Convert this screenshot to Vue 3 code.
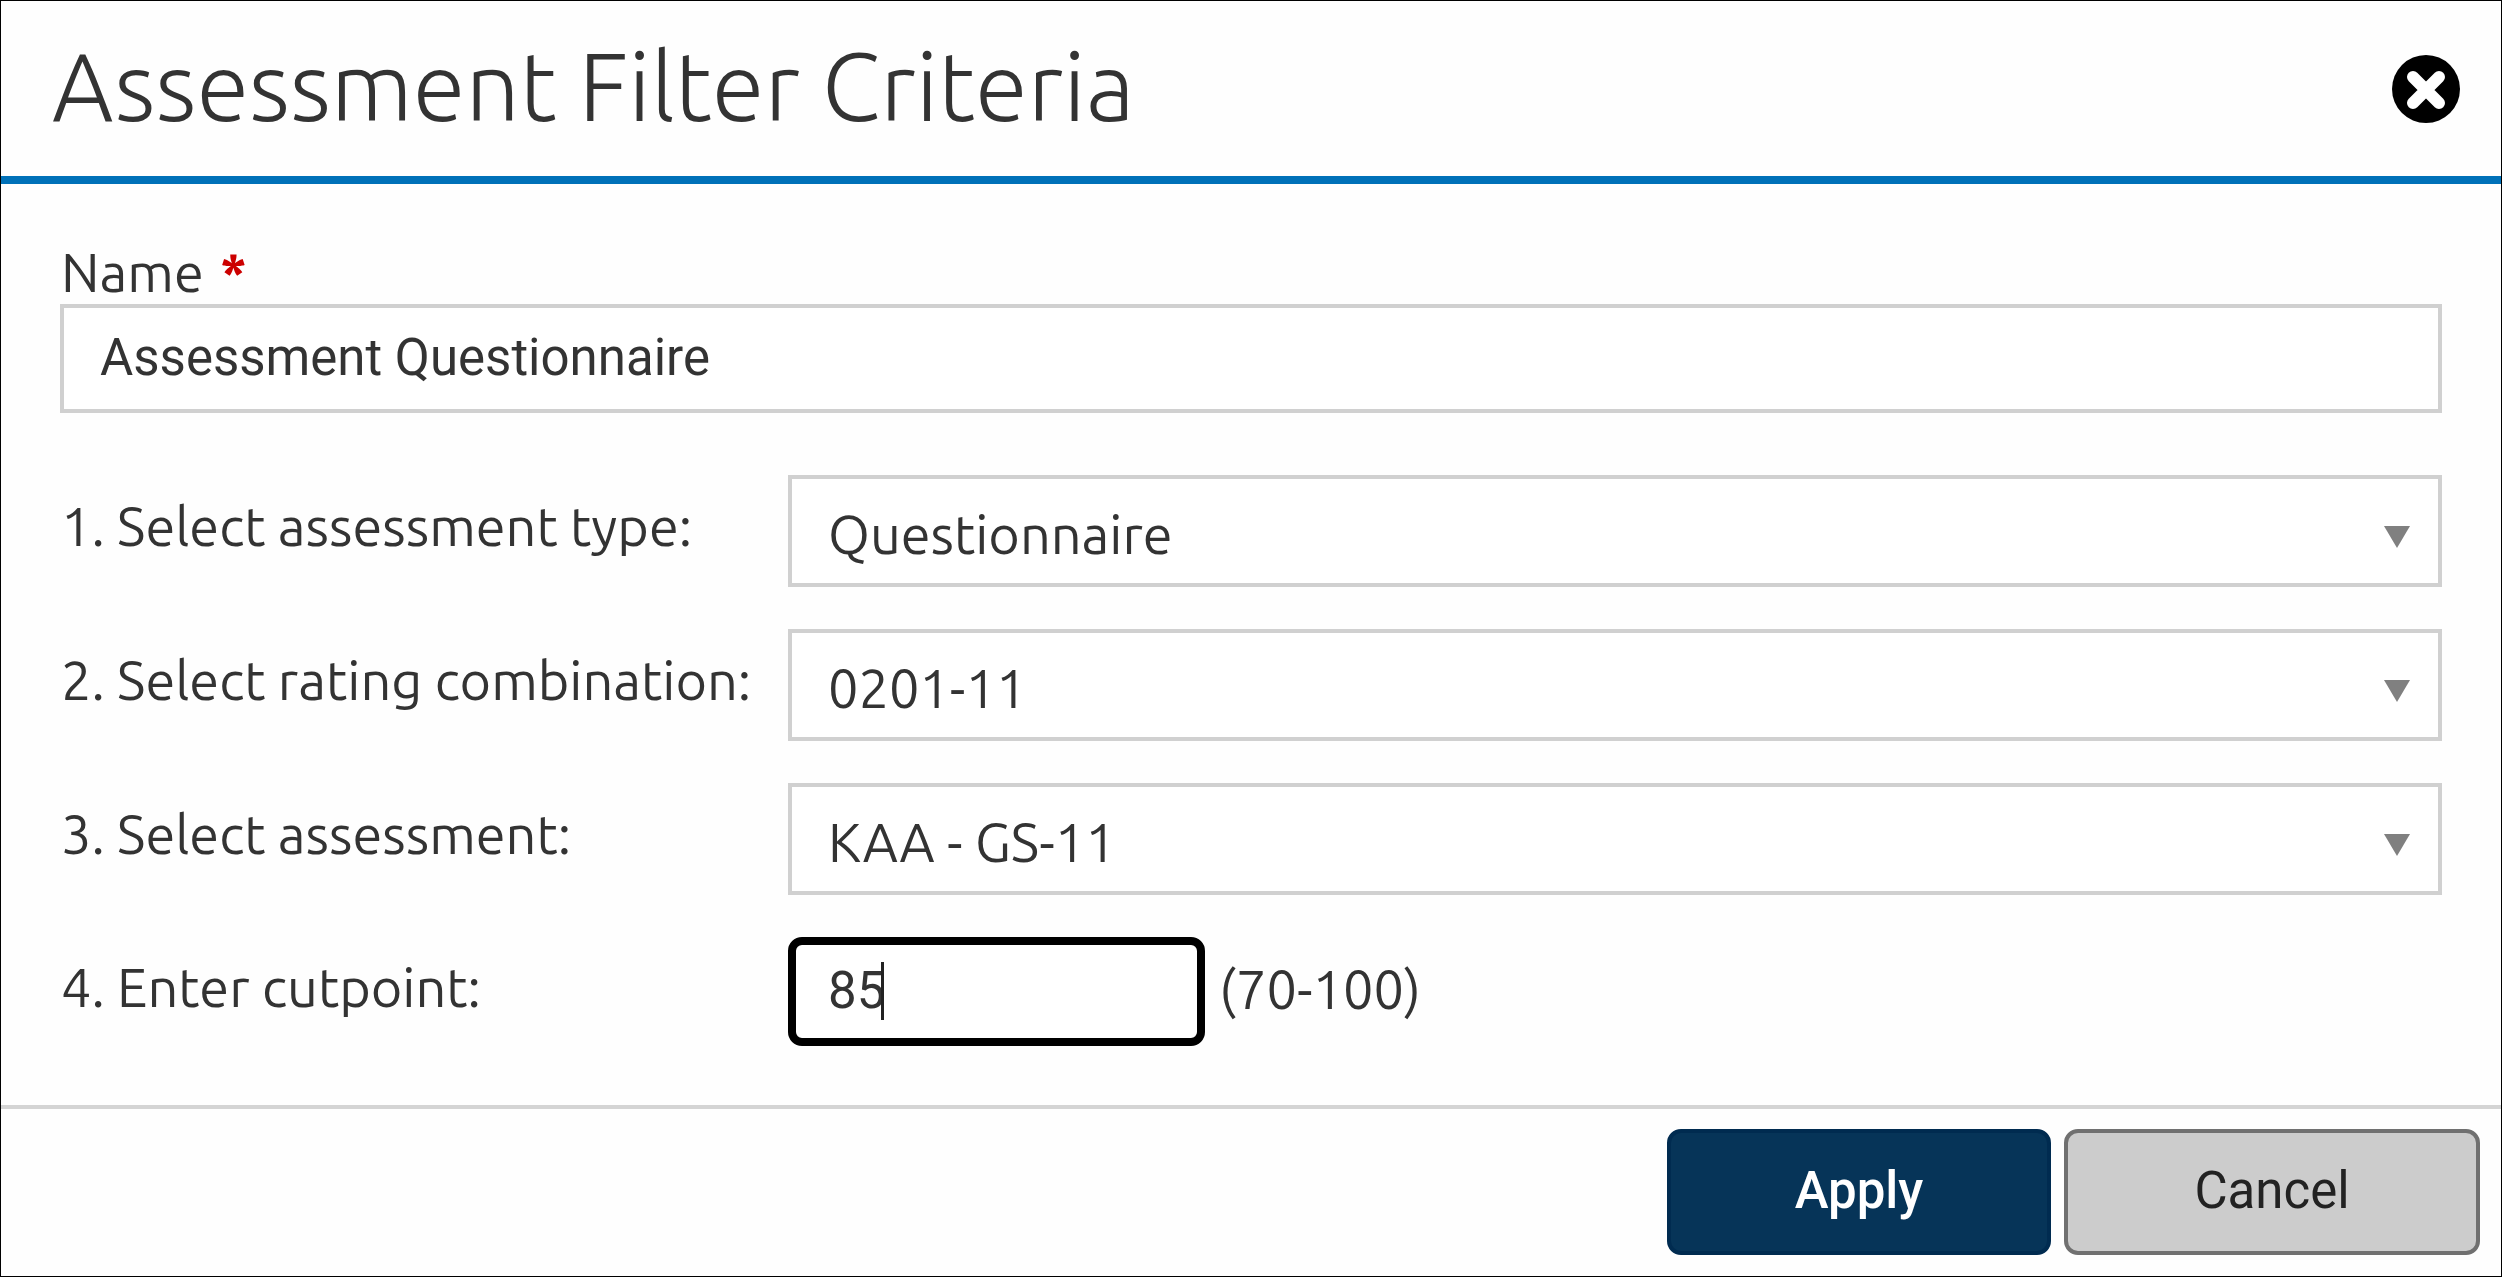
<script setup>
import { ref } from "vue";

const name = ref("Assessment Questionnaire");
const cutpoint = ref("85");

// drop-down rows of the form
const selects = ref([
  { id: "type", label: "1. Select assessment type:", value: "Questionnaire" },
  { id: "rating", label: "2. Select rating combination:", value: "0201-11" },
  { id: "assessment", label: "3. Select assessment:", value: "KAA - GS-11" },
]);
</script>

<template>
  <form class="dialog" role="dialog" aria-labelledby="dialog-title" @submit.prevent>
    <header class="dialog-header">
      <h1 id="dialog-title">Assessment Filter Criteria</h1>
      <button type="button" class="close-button" aria-label="Close">
        <svg viewBox="0 0 68 68" aria-hidden="true">
          <circle cx="34" cy="34" r="34" />
          <path d="M21 22 L47 48 M47 22 L21 48" />
        </svg>
      </button>
    </header>

    <div class="dialog-body">
      <div class="name-field">
        <label for="name">Name <span class="required">*</span></label>
        <input id="name" v-model="name" type="text" required />
      </div>

      <div v-for="item in selects" :key="item.id" class="row">
        <label :for="item.id">{{ item.label }}</label>
        <div class="select-wrap">
          <select :id="item.id" v-model="item.value">
            <option>{{ item.value }}</option>
          </select>
          <svg class="arrow" viewBox="0 0 26 22" aria-hidden="true">
            <path d="M0 0 H26 L13 22 Z" />
          </svg>
        </div>
      </div>

      <div class="row">
        <label for="cutpoint">4. Enter cutpoint:</label>
        <div class="cutpoint">
          <input id="cutpoint" v-model="cutpoint" type="text" inputmode="numeric" />
          <span class="caret"></span>
        </div>
        <span class="range">(70-100)</span>
      </div>
    </div>

    <footer class="dialog-footer">
      <button type="submit" class="btn apply">Apply</button>
      <button type="button" class="btn cancel">Cancel</button>
    </footer>
  </form>
</template>

<style>
body {
  background-color: #fefefe;
}
</style>

<style scoped>
.dialog,
.dialog * {
  box-sizing: border-box;
}
.dialog {
  display: flex;
  flex-direction: column;
  min-height: 100vh;
  border: 1px solid #000;
  font-family: Ubuntu, "Noto Sans", sans-serif;
  font-size: 54px;
  line-height: 60px;
  color: #333;
}

/* header */
.dialog-header {
  display: flex;
  align-items: center;
  justify-content: space-between;
  height: 183px;
  padding: 0 41px 0 51px;
  border-bottom: 8px solid #0071b8;
}
h1 {
  margin: 0;
  padding-bottom: 6px;
  font-size: 96px;
  font-weight: 300;
  line-height: 120px;
}
.close-button {
  width: 68px;
  height: 68px;
  padding: 0;
  border: none;
  background: none;
  cursor: pointer;
}
.close-button svg {
  display: block;
}
.close-button path {
  stroke: #fff;
  stroke-width: 12;
  stroke-linecap: round;
}

/* form fields */
.dialog-body {
  display: flex;
  flex: 1;
  flex-direction: column;
  gap: 42px;
  padding: 58px 59px;
}
.name-field {
  display: flex;
  flex-direction: column;
  gap: 2px;
  margin-bottom: 20px;
}
.name-field label {
  padding-left: 1px;
}
.required {
  margin-left: 4px;
  color: #c00;
  font-weight: bold;
}
input,
select {
  width: 100%;
  padding: 0 36px;
  border: 4px solid #d0d0d0;
  border-radius: 0;
  background-color: #fff;
  color: #333;
  outline: none;
}
input {
  height: 109px;
  padding-bottom: 2px;
  font-family: Roboto, sans-serif;
  font-size: 51px;
}
select {
  height: 112px;
  padding-top: 6px;
  appearance: none;
  font-family: inherit;
  font-size: 54px;
}
.row {
  display: flex;
  align-items: center;
}
.row label {
  width: 728px;
  padding: 0 0 10px 1px;
}
.select-wrap {
  position: relative;
  flex: 1;
}
.arrow {
  position: absolute;
  top: 51px;
  right: 32px;
  width: 26px;
  height: 22px;
  fill: #808080;
  pointer-events: none;
}
.cutpoint {
  position: relative;
  width: 417px;
  margin-right: 14px;
}
.cutpoint input {
  border: 8px solid #000;
  border-radius: 14px;
  padding: 0 32px 2px;
  caret-color: transparent;
}
.caret {
  position: absolute;
  top: 25px;
  left: 93px;
  width: 3px;
  height: 58px;
  background-color: #222;
}
.range {
  padding-bottom: 6px;
}

/* footer */
.dialog-footer {
  display: flex;
  justify-content: flex-end;
  gap: 13px;
  padding: 20px 21px 21px;
  border-top: 4px solid #d4d4d4;
}
.btn {
  height: 126px;
  padding: 0 0 4px;
  border: 4px solid #707070;
  border-radius: 14px;
  font-family: Roboto, sans-serif;
  font-size: 51px;
  cursor: pointer;
}
.apply {
  width: 384px;
  border-color: #002b50;
  background-color: #063458;
  color: #fff;
  font-weight: 500;
}
.cancel {
  width: 416px;
  background-color: #ccc;
  color: #222;
}
</style>
